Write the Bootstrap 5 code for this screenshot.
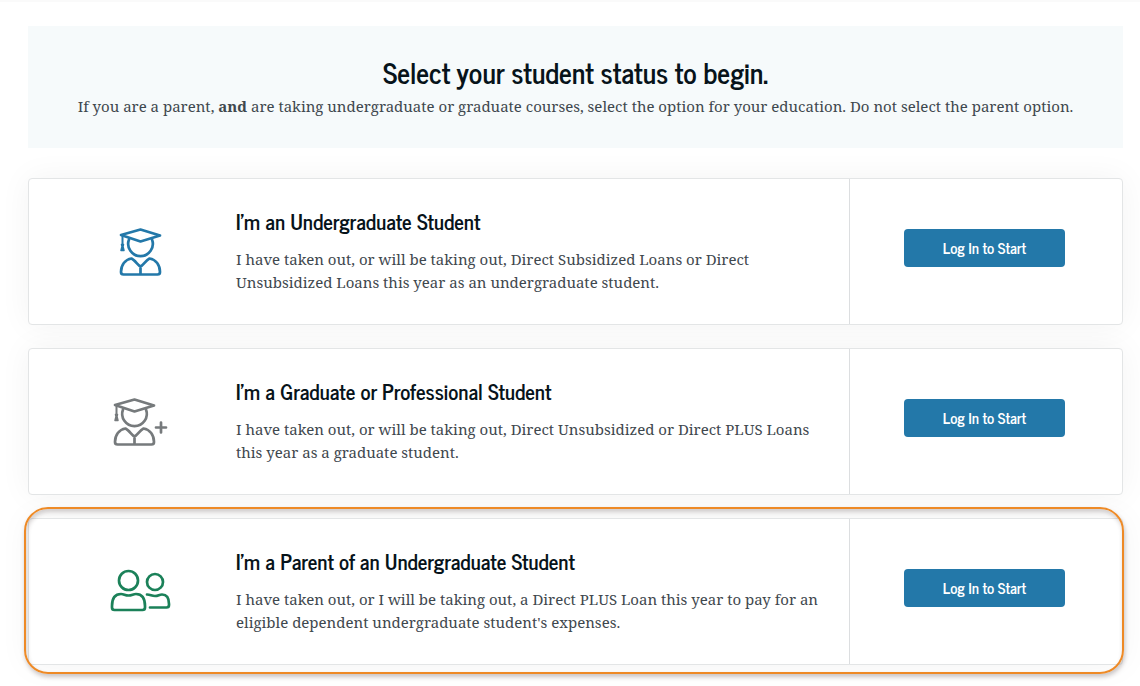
<!DOCTYPE html>
<html lang="en">
<head>
<meta charset="utf-8">
<meta name="viewport" content="width=device-width, initial-scale=1">
<title>Select your student status</title>
<link href="https://cdn.jsdelivr.net/npm/bootstrap@5.3.0/dist/css/bootstrap.min.css" rel="stylesheet">
<style>
body { font-family: "Noto Serif", "DejaVu Serif Condensed", "Liberation Serif", serif; font-size: 15px; line-height: 23px; color: #3f484e; }
.page { padding: 26px 17px 22px 28px; }
.page h1, .page h2, .btn-start { font-family: "News Cycle", "Roboto Condensed", "Liberation Sans Narrow", sans-serif; font-weight: 700; }
.page h1, .page h2 { color: #07131a; }
.shade-top { height: 2px; background: #fafafa; }
.intro { background: #f6fafb; padding: 30px 24px 30px; margin-bottom: 30px; }
.intro h1 { font-size: 28px; line-height: 32px; margin-bottom: 7px; }
.choice { background: #fff; border: 1px solid #e3e5e6; border-radius: 4px; box-shadow: 0 0 32px rgba(0, 0, 0, .05); margin-bottom: 23px; position: relative; }
.choice-icon { flex: 0 0 207px; padding: 0 0 4px 14px; }
.choice h2 { font-size: 21px; line-height: 24px; margin-bottom: 15px; }
.choice-text { padding: 30px 24px 30px 0; }
.choice-action { border-left: 1px solid #dcdee0; padding: 50px 57px 50px 54px; }
.btn-start, .btn-start:hover { background: #2378a9; color: #fff; }
.btn-start { height: 38px; font-size: 15px; border-radius: 4px; padding: 0; }
.choice-highlight::after { content: ""; position: absolute; inset: -12px -2px -10px -5px; border: 2px solid #ee8a26; border-radius: 24px; box-shadow: 1px 3px 4px rgba(60, 40, 40, .25), inset 1px 3px 4px rgba(60, 40, 40, .22); pointer-events: none; }
.ink-blue { color: #2378a9; }
.ink-gray { color: #767a7c; }
.ink-green { color: #1b8159; }
svg { fill: none; stroke: currentColor; stroke-width: 2.7; stroke-linecap: round; stroke-linejoin: round; }
</style>
</head>
<body>
<div class="shade-top position-absolute top-0 w-100"></div>
<main class="page">
  <header class="intro text-center">
    <h1>Select your student status to begin.</h1>
    <p class="mb-0">If you are a parent, <strong>and</strong> are taking undergraduate or graduate courses, select the option for your education. Do not select the parent option.</p>
  </header>

  <section class="choice">
    <div class="row g-0">
      <div class="col-9 d-flex">
        <div class="choice-icon d-flex align-items-center justify-content-center ink-blue">
          <svg width="80" height="70" viewBox="0 0 80 70" aria-hidden="true">
            <path d="M21 20 40.500 14.500 60 20.500 40.500 26.500Z"/>
            <path d="M29 24.500a12.300 12.300 0 1 0 23 0"/>
            <path stroke-width="2" d="M22.500 21v8"/><path stroke-width="1.500" fill="currentColor" d="M21.500 29.500h2l-.5 2 1 4h-3l1-4Z"/>
            <path d="M40.500 59.500V51.500C38 50.500 35 45 31.500 43.500C25 44.500 21 50 21 57q0 2.500 2.500 2.500H57.500Q60 59.500 60 57C60 50 56 44.500 49.500 43.500C46 45 43 50.500 40.500 51.500"/>
          </svg>
        </div>
        <div class="choice-text">
          <h2>I'm an Undergraduate Student</h2>
          <p class="mb-0">I have taken out, or will be taking out, Direct Subsidized Loans or Direct Unsubsidized Loans this year as an undergraduate student.</p>
        </div>
      </div>
      <div class="col-3 choice-action"><button type="button" class="btn btn-start w-100">Log In to Start</button></div>
    </div>
  </section>

  <section class="choice">
    <div class="row g-0">
      <div class="col-9 d-flex">
        <div class="choice-icon d-flex align-items-center justify-content-center ink-gray">
          <svg width="80" height="70" viewBox="0 0 80 70" aria-hidden="true">
            <path d="M15 20 34.500 14.500 54 20.500 34.500 26.500Z"/>
            <path d="M23 24.500a12.300 12.300 0 1 0 23 0"/>
            <path stroke-width="2" d="M16.500 21v8"/><path stroke-width="1.500" fill="currentColor" d="M15.500 29.500h2l-.5 2 1 4h-3l1-4Z"/>
            <path d="M34.500 59.500V51.500C32 50.500 29 45 25.500 43.500C19 44.500 15 50 15 57q0 2.500 2.500 2.500H51.500Q54 59.500 54 57C54 50 50 44.500 43.500 43.500C40 45 37 50.500 34.500 51.500"/>
            <path d="M56 42.500h10m-5-5v10"/>
          </svg>
        </div>
        <div class="choice-text">
          <h2>I'm a Graduate or Professional Student</h2>
          <p class="mb-0">I have taken out, or will be taking out, Direct Unsubsidized or Direct PLUS Loans this year as a graduate student.</p>
        </div>
      </div>
      <div class="col-3 choice-action"><button type="button" class="btn btn-start w-100">Log In to Start</button></div>
    </div>
  </section>

  <section class="choice choice-highlight mb-0">
    <div class="row g-0">
      <div class="col-9 d-flex">
        <div class="choice-icon d-flex align-items-center justify-content-center ink-green">
          <svg width="80" height="70" viewBox="0 0 80 70" aria-hidden="true">
            <circle cx="28.500" cy="25.500" r="9.500"/>
            <path d="M21 39C14.500 39 12 44 12 51v1.500Q12 55 14.500 55H42.500Q45 55 45 52.500V51C45 44 42.500 39 36 39c-3 0-4 1.500-7.500 1.500S24 39 21 39Z"/>
            <circle cx="55" cy="27" r="8"/>
            <path d="M47 39.500c3.500 0 4.500 1.500 8 1.500s4-1.500 7-1.500c5 0 7 4 7 9.500v1q0 2.500-2.500 2.500H50"/>
          </svg>
        </div>
        <div class="choice-text">
          <h2>I'm a Parent of an Undergraduate Student</h2>
          <p class="mb-0">I have taken out, or I will be taking out, a Direct PLUS Loan this year to pay for an eligible dependent undergraduate student's expenses.</p>
        </div>
      </div>
      <div class="col-3 choice-action"><button type="button" class="btn btn-start w-100">Log In to Start</button></div>
    </div>
  </section>
</main>
<script src="https://cdn.jsdelivr.net/npm/bootstrap@5.3.0/dist/js/bootstrap.bundle.min.js"></script>
</body>
</html>
